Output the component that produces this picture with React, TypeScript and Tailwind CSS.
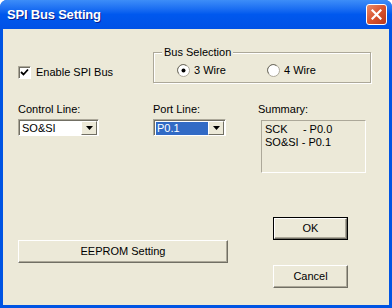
import React from 'react';

const font = { fontFamily: '"Liberation Sans", Arial, sans-serif' };

const Btn: React.FC<{ label: string; className?: string; isDefault?: boolean }> = ({ label, className = '', isDefault }) => (
    <div className={`${className} ${isDefault ? 'border border-black' : ''} h-[23px]`}>
        <div className="w-full h-full bg-[#ECE9D8] border border-t-white border-l-white border-r-[#716F64] border-b-[#716F64] shadow-[inset_-1px_-1px_0_#ACA899] flex items-center justify-center text-[11px] text-black">
            {label}
        </div>
    </div>
);

const Combo: React.FC<{ value: string; width: string; selected?: boolean }> = ({ value, width, selected }) => (
    <div className={`${width} h-[17px] bg-white border border-t-[#ACA899] border-l-[#ACA899] border-r-white border-b-white shadow-[inset_1px_1px_0_#716F64] flex items-center pl-[2px] pt-[1px] pr-[1px]`}>
        <div className={`flex-1 h-[13px] leading-[13px] text-[11px] pl-[1px] ${selected ? 'bg-[#316AC5] text-white' : 'text-black'}`}>
            {value}
        </div>
        <div className="w-[16px] h-[14px] bg-[#ECE9D8] border border-t-white border-l-white border-r-[#716F64] border-b-[#716F64] flex items-center justify-center">
            <svg width="7" height="4" viewBox="0 0 7 4"><path d="M0 0h7L3.5 4z" fill="#000" /></svg>
        </div>
    </div>
);

const Radio: React.FC<{ checked?: boolean; label: string }> = ({ checked, label }) => (
    <div className="flex items-center gap-[4px] text-[11px] text-black">
        <svg width="13" height="13" viewBox="0 0 13 13">
            <circle cx="6.5" cy="6.5" r="6" fill="#fff" stroke="#ACA899" />
            <path d="M1.8 9.5A5.5 5.5 0 0 1 9.5 1.8" stroke="#716F64" fill="none" />
            {checked && <circle cx="6.5" cy="6.5" r="2" fill="#000" />}
        </svg>
        <span>{label}</span>
    </div>
);

export default function App() {
    return (
        <div className="w-[392px] h-[308px] flex flex-col bg-[#0054E3] rounded-t-[7px] overflow-hidden" style={font}>
            {/* title bar */}
            <div className="h-[29px] flex items-center justify-between pl-[7px] pr-[5px] bg-gradient-to-b from-[#3D8DF8] via-[#0058EE] to-[#0051E6]">
                <span className="text-white font-bold text-[13px] tracking-[-0.2px] [text-shadow:1px_1px_0_#0A1E8C]">SPI Bus Setting</span>
                <div className="w-[21px] h-[21px] rounded-[3px] border border-white bg-gradient-to-br from-[#E88B6A] via-[#D9532E] to-[#B8381C] flex items-center justify-center">
                    <svg width="11" height="11" viewBox="0 0 11 11">
                        <path d="M1.5 1.5l8 8M9.5 1.5l-8 8" stroke="#fff" strokeWidth="2.2" strokeLinecap="square" />
                    </svg>
                </div>
            </div>

            {/* client area */}
            <div className="flex-1 mx-[3px] mb-[3px] bg-[#ECE9D8] pl-[15px] pt-[23px] text-[11px] text-black">
                {/* row: enable + bus selection */}
                <div className="flex">
                    <div className="w-[135px] pt-[12px]">
                        <div className="flex items-center gap-[5px]">
                            <div className="w-[13px] h-[13px] bg-white border border-t-[#ACA899] border-l-[#ACA899] border-r-white border-b-white shadow-[inset_1px_1px_0_#716F64] flex items-center justify-center">
                                <svg width="9" height="9" viewBox="0 0 9 9">
                                    <path d="M1 4l2.5 2.5L8 1.5" stroke="#000" strokeWidth="1.8" fill="none" />
                                </svg>
                            </div>
                            <span>Enable SPI Bus</span>
                        </div>
                    </div>
                    <div className="relative w-[218px] h-[31px] border border-[#ACA899] shadow-[1px_1px_0_#fff,inset_1px_1px_0_#fff] flex items-center pl-[23px] pt-[6px]">
                        <span className="absolute -top-[7px] left-[8px] px-[2px] bg-[#ECE9D8] leading-[13px]">Bus Selection</span>
                        <div className="w-[90px]"><Radio checked label="3 Wire" /></div>
                        <Radio label="4 Wire" />
                    </div>
                </div>

                {/* row: control line, port line, summary */}
                <div className="flex mt-[20px]">
                    <div className="w-[135px]">
                        <div className="h-[13px] leading-[13px]">Control Line:</div>
                        <div className="mt-[3px]"><Combo value="SO&SI" width="w-[81px]" /></div>
                    </div>
                    <div className="w-[105px]">
                        <div className="h-[13px] leading-[13px]">Port Line:</div>
                        <div className="mt-[3px]"><Combo value="P0.1" width="w-[73px]" selected /></div>
                    </div>
                    <div>
                        <div className="h-[13px] leading-[13px]">Summary:</div>
                        <div className="ml-[3px] mt-[4px] w-[105px] h-[53px] border border-t-[#ACA899] border-l-[#ACA899] border-r-white border-b-white pl-[3px] pt-[2px] leading-[13px]">
                            <div className="whitespace-pre">SCK     - P0.0</div>
                            <div className="whitespace-pre">SO&amp;SI - P0.1</div>
                        </div>
                    </div>
                </div>

                {/* row: buttons */}
                <div className="flex">
                    <div className="w-[240px] pt-[67px]">
                        <Btn label="EEPROM Setting" className="w-[210px]" />
                    </div>
                    <div className="ml-[15px] pt-[44px]">
                        <Btn label="OK" className="w-[75px]" isDefault />
                        <Btn label="Cancel" className="w-[75px] mt-[25px]" />
                    </div>
                </div>
            </div>
        </div>
    );
}
